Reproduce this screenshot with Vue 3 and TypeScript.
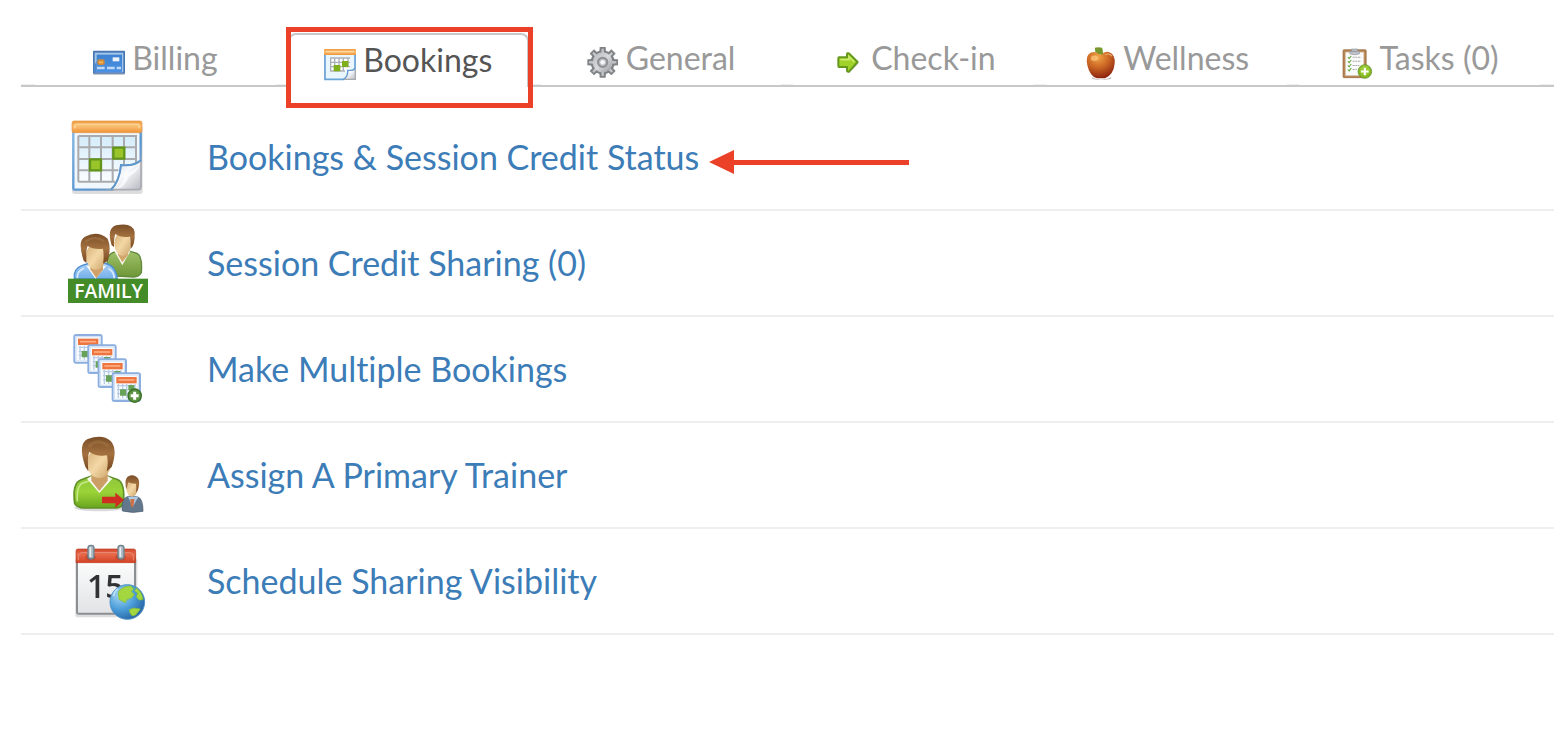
<script setup lang="ts">
interface Tab {
  id: string
  label: string
  active?: boolean
}
interface Entry {
  id: string
  label: string
  marked?: boolean
}

const tabs: Tab[] = [
  { id: 'billing', label: 'Billing' },
  { id: 'bookings', label: 'Bookings', active: true },
  { id: 'general', label: 'General' },
  { id: 'checkin', label: 'Check-in' },
  { id: 'wellness', label: 'Wellness' },
  { id: 'tasks', label: 'Tasks (0)' },
]

const entries: Entry[] = [
  { id: 'status', label: 'Bookings & Session Credit Status', marked: true },
  { id: 'family', label: 'Session Credit Sharing (0)' },
  { id: 'multiple', label: 'Make Multiple Bookings' },
  { id: 'trainer', label: 'Assign A Primary Trainer' },
  { id: 'schedule', label: 'Schedule Sharing Visibility' },
]

const miniCalendars: [number, number][] = [[42, 29], [84, 60], [115, 102], [157, 144]]
const teeth: number[] = [0, 45, 90, 135, 180, 225, 270, 315]
</script>

<template>
  <main class="page">
    <svg class="defs" width="0" height="0" aria-hidden="true">
      <defs>
        <filter id="soft"><feGaussianBlur stdDeviation="2" /></filter>
        <linearGradient id="orange" x2="0" y2="1"><stop offset="0" stop-color="#ee9a3e" /><stop offset=".45" stop-color="#f9bd72" /><stop offset="1" stop-color="#ee9538" /></linearGradient>
        <linearGradient id="sky" x2="0" y2="1"><stop offset="0" stop-color="#d4ecfa" /><stop offset="1" stop-color="#fbfdff" /></linearGradient>
        <linearGradient id="frame" x2="1" y2="1"><stop offset="0" stop-color="#86b9e4" /><stop offset=".6" stop-color="#5795cf" /><stop offset="1" stop-color="#a5a9b0" /></linearGradient>
        <linearGradient id="curl" x2="1" y2="1"><stop offset="0" stop-color="#c5d2e1" /><stop offset=".45" stop-color="#f8fafc" /><stop offset="1" stop-color="#b7b9c1" /></linearGradient>
        <linearGradient id="card" x2="0" y2="1"><stop offset="0" stop-color="#3f82d0" /><stop offset="1" stop-color="#4a90e4" /></linearGradient>
        <linearGradient id="hair" x2="0" y2="1"><stop offset="0" stop-color="#7a4e28" /><stop offset=".5" stop-color="#a4713f" /><stop offset="1" stop-color="#75451e" /></linearGradient>
        <linearGradient id="face" x2="1" y2="1"><stop offset="0" stop-color="#d6ad75" /><stop offset=".5" stop-color="#f3d8a6" /><stop offset="1" stop-color="#cba268" /></linearGradient>
        <linearGradient id="shirt" x2="0" y2="1"><stop offset="0" stop-color="#8dc63c" /><stop offset=".5" stop-color="#9bd338" /><stop offset="1" stop-color="#68a51e" /></linearGradient>
        <linearGradient id="olive" x2="0" y2="1"><stop offset="0" stop-color="#a2c26b" /><stop offset="1" stop-color="#6d9736" /></linearGradient>
        <linearGradient id="blue" x2="0" y2="1"><stop offset="0" stop-color="#acd1f6" /><stop offset="1" stop-color="#72aeea" /></linearGradient>
        <linearGradient id="gear" x2="1" y2="1"><stop offset="0" stop-color="#b5b8bc" /><stop offset=".5" stop-color="#d7d9dc" /><stop offset="1" stop-color="#94979b" /></linearGradient>
        <radialGradient id="apple" cx=".4" cy=".2" r=".85"><stop offset="0" stop-color="#f2a545" /><stop offset=".45" stop-color="#cc6826" /><stop offset="1" stop-color="#861c0c" /></radialGradient>
        <linearGradient id="red" x2="0" y2="1"><stop offset="0" stop-color="#d4492e" /><stop offset=".4" stop-color="#e7684a" /><stop offset="1" stop-color="#d34222" /></linearGradient>
        <linearGradient id="paper" x2="0" y2="1"><stop offset="0" stop-color="#fff" /><stop offset="1" stop-color="#e2e3e5" /></linearGradient>
        <radialGradient id="globe" cx=".3" cy=".3" r=".75"><stop offset="0" stop-color="#a8d7f3" /><stop offset=".55" stop-color="#4c9ed9" /><stop offset="1" stop-color="#2867a8" /></radialGradient>
      </defs>
    </svg>

    <nav class="tabs" aria-label="Client sections">
      <a v-for="tab in tabs" :key="tab.id" href="#" class="tab" :class="{ active: tab.active }" :aria-current="tab.active ? 'page' : undefined">
        <svg v-if="tab.id === 'billing'" class="tab-icon" viewBox="276 78 96 96" aria-hidden="true">
          <path d="M277 160h94v5h-94z" fill="#c6c8cb" />
          <rect x="276" y="92" width="96" height="69" rx="2" fill="#4776b3" />
          <rect x="281" y="98" width="86" height="59" fill="#a1c4e9" />
          <rect x="287" y="104" width="76" height="52" fill="url(#card)" />
          <path d="M281 157V134l6-12v35z" fill="#4586d2" />
          <rect x="289" y="118" width="22" height="17" rx="5" fill="#d18a39" /><path d="M294 124h12v6h-12z" fill="#f5b45a" />
          <path d="M335 112h20v12h-20z" fill="#edf3fb" />
          <path d="M288 144h23M318 144h23M347 144h13" stroke="#bed8f5" stroke-width="7" />
        </svg>

        <svg v-else-if="tab.id === 'bookings'" class="tab-icon" viewBox="165 84 96 96" aria-hidden="true">
          <g filter="url(#soft)">
            <rect x="166" y="94" width="94" height="86" rx="3" fill="#b0b5bb" />
            <path d="M168 100h90v45l-33 33h-57z" fill="#eaf6fd" stroke="#6ba3d8" stroke-width="5" />
            <rect x="165" y="87" width="96" height="18" rx="3" fill="url(#orange)" /><path d="M171 93h84v4h-84z" fill="#ffd9a3" />
            <path d="M183 112h60v42h-60z" fill="#fff" />
            <path d="M183 114h60M183 127h60M183 140h60M183 153h45M185 112v43M197 112v43M210 112v43M223 112v43M237 112v30" stroke="#a9b0b8" stroke-width="4" />
            <path d="M194 135h20v19h-20zM219 123h19v18h-19z" fill="#7eb01e" />
            <path d="M260 146q-7 6-24 5 2 20-14 28h38z" fill="url(#curl)" />
            <path d="M260 146q-7 6-24 5 2 20-14 28" fill="none" stroke="#629ad1" stroke-width="4" />
            <path d="M225 178h34v-28" fill="none" stroke="#a8a9ac" stroke-width="4" />
          </g>
        </svg>

        <svg v-else-if="tab.id === 'general'" class="tab-icon" viewBox="52 78 96 96" aria-hidden="true">
          <g filter="url(#soft)">
            <g fill="#808386">
              <path v-for="angle in teeth" :key="angle" d="M89 98l1-17h18l1 17z" :transform="`rotate(${angle} 99 127)`" />
              <circle cx="99" cy="127" r="36" />
            </g>
            <path v-for="angle in teeth" :key="angle" d="M95 99l1-13h6l1 13z" :transform="`rotate(${angle} 99 127)`" fill="#c3c5c8" />
            <circle cx="99" cy="127" r="30" fill="url(#gear)" />
            <circle cx="99" cy="127" r="14" fill="#b9bcc0" stroke="#8c9095" stroke-width="6" />
            <circle cx="99" cy="127" r="7" fill="#f4f5f6" />
          </g>
        </svg>

        <svg v-else-if="tab.id === 'checkin'" class="tab-icon" viewBox="789 78 96 96" aria-hidden="true">
          <g filter="url(#soft)">
            <path d="M810 145h22v12l10 1 27-27-2-3-27 16z" fill="#d8dadd" />
            <path d="M810 112h24v-9q0-5 6-3l26 26-26 29q-6 1-6-4v-10h-24q-2 0-2-4v-21q0-4 2-4z" fill="#a1d22b" stroke="#65981c" stroke-width="6" stroke-linejoin="round" />
            <path d="M814 119h26v-9l16 16" fill="none" stroke="#cceb6d" stroke-width="5" />
          </g>
        </svg>

        <svg v-else-if="tab.id === 'wellness'" class="tab-icon" viewBox="185 76 94 94" aria-hidden="true">
          <g filter="url(#soft)">
            <path d="M207 168q30 14 59-1l-3 6q-27 5-53 0z" fill="#bbb" />
            <path d="M234 101q-11-12-30-5-16 9-9 37 7 31 28 38h24q25-12 28-43 3-27-16-34-12-4-25 7z" fill="url(#apple)" />
            <ellipse cx="216" cy="112" rx="11" ry="8" fill="#ffcd86" opacity=".65" />
            <path d="M217 81q9-3 21 0 3 8 3 20-14 1-23-8z" fill="#77972e" />
            <path d="M248 101q14-4 19 5" stroke="#e6a665" stroke-width="4" fill="none" />
          </g>
        </svg>

        <svg v-else class="tab-icon" viewBox="939 76 94 94" aria-hidden="true">
          <rect x="945" y="87" width="68" height="82" rx="3" fill="#b78350" stroke="#94663b" stroke-width="2" />
          <path d="M952 94h54v69h-54z" fill="#fafafa" stroke="#d5c4b0" stroke-width="2" />
          <path d="M965 91h28v8q-14 5-28 0zM970 85h18v8h-18z" fill="#c6c9ce" stroke="#898d93" stroke-width="2" />
          <path d="M959 109l4 4 6-8M959 121l4 4 6-8M959 133l4 4 6-8M959 145l4 4 6-8" stroke="#5fa638" stroke-width="3" fill="none" />
          <path d="M973 109h25M973 121h25M973 133h20M973 145h12" stroke="#a9abad" stroke-width="3" stroke-dasharray="6 2" />
          <circle cx="1009" cy="151" r="20" fill="#83b725" stroke="#5d891e" stroke-width="2" /><circle cx="1009" cy="148" r="15" fill="#9bcb36" />
          <path d="M1009 140v22M998 151h22" stroke="#fff" stroke-width="6" />
        </svg>
        <span>{{ tab.label }}</span>
        <i v-if="tab.active" class="highlight" aria-hidden="true"></i>
      </a>
    </nav>

    <ul class="entries">
      <li v-for="entry in entries" :key="entry.id" class="entry">
        <svg v-if="entry.id === 'status'" class="entry-icon" viewBox="24 21 240 240" aria-hidden="true">
          <g filter="url(#soft)">
            <rect x="36" y="46" width="212" height="206" rx="9" fill="#cfcfd2" opacity=".7" />
            <path d="M40 58h202v94l-82 87H46q-6 0-6-6z" fill="#f0f8fd" stroke="url(#frame)" stroke-width="7" />
            <rect x="55" y="78" width="173" height="137" fill="url(#sky)" />
            <path d="M55 78h173v88M55 112h173M55 147h173M55 181h120M55 215h110M55 77v139M88 77v139M123 77v139M158 77v139M192 77v90" fill="none" stroke="#a9aaad" stroke-width="6" />
            <path d="M90 148h33v33H90zM160 113h33v33h-33z" fill="#99c52c" stroke="#62951a" stroke-width="7" />
            <path d="M243 150q-19 19-60 15-5 50-30 74h82q8 0 8-8z" fill="url(#curl)" stroke="#a9abb2" stroke-width="5" />
            <path d="M243 150q-19 19-60 15-5 50-30 74" fill="none" stroke="#5b96cd" stroke-width="6" />
            <path d="M170 237q20-16 24-48 25-1 47-28-8 25-35 39-10 29-36 37z" fill="#fff" opacity=".7" />
            <rect x="36" y="33" width="210" height="35" rx="6" fill="url(#orange)" stroke="#e9953f" stroke-width="2" />
            <path d="M45 55v-9q0-3 4-3h184q4 0 4 3v9" fill="none" stroke="#ffd391" stroke-width="5" />
          </g>
        </svg>

        <svg v-else-if="entry.id === 'family'" class="entry-icon" viewBox="24 24 240 240" aria-hidden="true">
          <g filter="url(#soft)">
            <path d="M144 182q-11-58 14-69l20-6h25l28 8q17 8 13 58-8 13-22 13z" fill="url(#olive)" stroke="#61893b" stroke-width="4" />
            <path d="M163 108l24 43 24-43z" fill="#f6f6ef" />
            <path d="M174 99h30v21l-17 22-13-22z" fill="#d2a66b" />
            <ellipse cx="188" cy="86" rx="25" ry="36" fill="url(#face)" />
            <path d="M155 91q-16-50 13-60 50-10 56 20 2 38-12 51 1-22-2-37-27 4-44-8-5 12-4 39z" fill="url(#hair)" />
            <path d="M43 192q-5-29 22-40l24-8h40q38 4 43 48z" fill="url(#blue)" stroke="#4e8fce" stroke-width="4" />
            <path d="M52 190q-1-22 20-30M163 190q-2-22-18-29" fill="none" stroke="#d6ebff" stroke-width="5" />
            <path d="M79 152l28 40 32-40z" fill="#fafbf7" />
            <path d="M91 138h38v26l-20 26-18-27z" fill="#d0a26a" />
            <ellipse cx="108" cy="124" rx="30" ry="40" fill="url(#face)" />
            <path d="M71 137q-20-60 4-72 38-20 68 6 12 28 0 66l-14 9q4-22 0-45-29 3-46-8-6 12-3 51z" fill="url(#hair)" />
            <path d="M76 80q27-20 56-2" fill="none" stroke="#bb8955" stroke-width="7" opacity=".35" />
          </g>
          <rect x="24" y="191" width="240" height="73" fill="#438c28" />
          <text x="146" y="248" text-anchor="middle" font-family="Open Sans, sans-serif" font-size="58" font-weight="600" fill="#fff">FAMILY</text>
        </svg>

        <svg v-else-if="entry.id === 'multiple'" class="entry-icon" viewBox="24 12 240 240" aria-hidden="true">
          <g filter="url(#soft)">
            <g v-for="([x, y], index) in miniCalendars" :key="index" :transform="`translate(${x} ${y})`">
              <rect x="1" y="1" width="82" height="83" rx="5" fill="#f8fbfe" stroke="#8cafdf" stroke-width="6" />
              <rect x="6" y="6" width="72" height="73" fill="none" stroke="#d5e3f6" stroke-width="4" />
              <rect x="12" y="12" width="61" height="19" fill="#ed7440" /><path d="M18 21h48" stroke="#ffad82" stroke-width="5" />
              <path d="M14 38h56M14 50h56M14 62h56M18 33v42M31 33v42M43 33v42M56 33v42M68 33v42" stroke="#b9cce6" stroke-width="4" />
              <path d="M23 49h19v19H23zM48 36h18v16H48z" fill="#67a258" />
            </g>
            <circle cx="224" cy="212" r="20" fill="#5b9042" stroke="#386f28" stroke-width="4" />
            <path d="M224 200v24M212 212h24" stroke="#fff" stroke-width="9" />
          </g>
        </svg>

        <svg v-else-if="entry.id === 'trainer'" class="entry-icon" viewBox="24 15 240 240" aria-hidden="true">
          <g filter="url(#soft)">
            <ellipse cx="118" cy="233" rx="75" ry="11" fill="#bbb" opacity=".55" />
            <path d="M44 221q-8-61 18-71l32-12h48l32 11q22 10 16 74-10 11-27 11H70q-16-1-26-13z" fill="url(#shirt)" stroke="#609127" stroke-width="5" />
            <path d="M52 214q-3-48 17-55l20-7" fill="none" stroke="#c5e984" stroke-width="5" />
            <path d="M81 146l37 43 39-43-15-8H94z" fill="#f6f7ee" />
            <path d="M94 122h49v30l-25 31-24-31z" fill="#cb9e65" />
            <ellipse cx="117" cy="100" rx="36" ry="44" fill="url(#face)" />
            <path d="M76 110Q52 42 83 27q45-16 69 6 22 24 3 78l-15 13q6-25 1-48-33 4-53-10-7 15-3 58z" fill="url(#hair)" />
            <path d="M86 50q26-28 60-2" fill="none" stroke="#bb8b54" stroke-width="9" opacity=".3" />
            <path d="M187 243q-4-38 15-43l12-3 20 4q15 5 15 43-31 7-62-1z" fill="#64788d" stroke="#46586b" stroke-width="2" />
            <path d="M204 200l14 30 17-30z" fill="#abcde8" /><path d="M211 207h13l-5 26-7-6z" fill="#ce7044" />
            <ellipse cx="216" cy="175" rx="17" ry="25" fill="url(#face)" />
            <path d="M199 178q-10-41 18-42 29 4 17 43l-6 9q2-16 0-27-14 1-23-4z" fill="url(#hair)" />
            <path d="M126 200h40v-12l26 22-26 23v-13h-40z" fill="#ce2d20" />
          </g>
        </svg>

        <svg v-else class="entry-icon" viewBox="24 18 240 240" aria-hidden="true">
          <g filter="url(#soft)">
            <rect x="46" y="72" width="186" height="175" rx="5" fill="#bbb" opacity=".5" />
            <rect x="51" y="59" width="174" height="177" rx="4" fill="url(#paper)" stroke="#8c8f92" stroke-width="6" />
            <path d="M55 83h167v8H55z" fill="#fff" />
            <path d="M48 83V48q0-6 6-6h167q6 0 6 6v35z" fill="url(#red)" stroke="#bd3c24" stroke-width="2" />
            <path d="M55 76v-9q0-14 12-14h141q12 0 12 14v9" fill="none" stroke="#ed9079" stroke-width="3" />
            <ellipse cx="92" cy="66" rx="15" ry="11" fill="#bd4830" /><ellipse cx="182" cy="66" rx="15" ry="11" fill="#bd4830" />
            <rect x="84" y="31" width="18" height="41" rx="8" fill="#a9b7bf" stroke="#71818c" stroke-width="4" />
            <rect x="174" y="31" width="18" height="41" rx="8" fill="#a9b7bf" stroke="#71818c" stroke-width="4" />
            <path d="M91 37v29M181 37v29" stroke="#e8eff3" stroke-width="5" />
            <text x="136" y="188" text-anchor="middle" font-family="Open Sans, sans-serif" font-size="96" font-weight="600" fill="#303235">15</text>
            <circle cx="202" cy="201" r="52" fill="url(#globe)" stroke="#5295c7" stroke-width="3" />
            <path d="M176 169q13-16 36-16l9 8-7 9 9 8-8 11-14 4-5 10-19-10-2-15zM229 159q17 12 20 35l-12 1-8-10 4-10-9-7zM208 224l13-5 20 3-14 18-10 3-7-9z" fill="#a4d640" stroke="#82bc34" stroke-width="2" />
            <path d="M160 184q3-15 14-23" fill="none" stroke="#d5effb" stroke-width="5" opacity=".7" />
          </g>
        </svg>
        <a href="#" class="entry-link">{{ entry.label }}</a>
        <svg v-if="entry.marked" class="pointer" viewBox="0 0 200 24" aria-hidden="true"><path d="M0 12L25 0v10h175v5H25v9z" fill="#eb4128" /></svg>
      </li>
    </ul>
  </main>
</template>

<style>
body {
  margin: 0;
  background: #fff;
}
</style>

<style scoped>
.page {
  padding: 33px 0 0 21px;
  font-family: Lato, "Open Sans", sans-serif;
  font-variant-ligatures: none;
}
.defs {
  position: absolute;
}
.tabs {
  display: grid;
  grid-template-columns: repeat(6, 1fr);
  gap: 12px;
  padding: 0 14px;
  border-bottom: 2px solid #c8c8c8;
  box-shadow: inset 0 -1px #eee;
}
.tab {
  display: flex;
  justify-content: center;
  align-items: center;
  gap: 7px;
  box-sizing: border-box;
  height: 52px;
  padding-bottom: 2px;
  background: #fff;
  color: #999;
  font-size: 32px;
  line-height: 40px;
  text-decoration: none;
  white-space: nowrap;
}
.tab-icon {
  width: 32px;
  height: 32px;
  flex: none;
  margin-top: 8px;
  overflow: visible;
}
.tab.active {
  position: relative;
  height: 54px;
  margin-bottom: -2px;
  border: 2px solid #c8c8c8;
  border-bottom: 0;
  border-radius: 8px 8px 0 0;
  color: #555;
}
.highlight {
  position: absolute;
  inset: -8px -6px -21px -4px;
  border: 5px solid #eb4128;
}
.entries {
  margin: 18px 0 0;
  padding: 0;
  list-style: none;
}
.entry {
  display: flex;
  align-items: center;
  padding: 12px 0 12px 47px;
  border-bottom: 2px solid #eee;
}
.entry-icon {
  width: 80px;
  height: 80px;
  flex: none;
  overflow: visible;
}
.entry-link {
  margin-left: 59px;
  color: #3c7cb7;
  font-size: 34px;
  line-height: 48px;
  text-decoration: none;
}
.pointer {
  width: 200px;
  height: 24px;
  margin: 10px 0 0 10px;
}
</style>
